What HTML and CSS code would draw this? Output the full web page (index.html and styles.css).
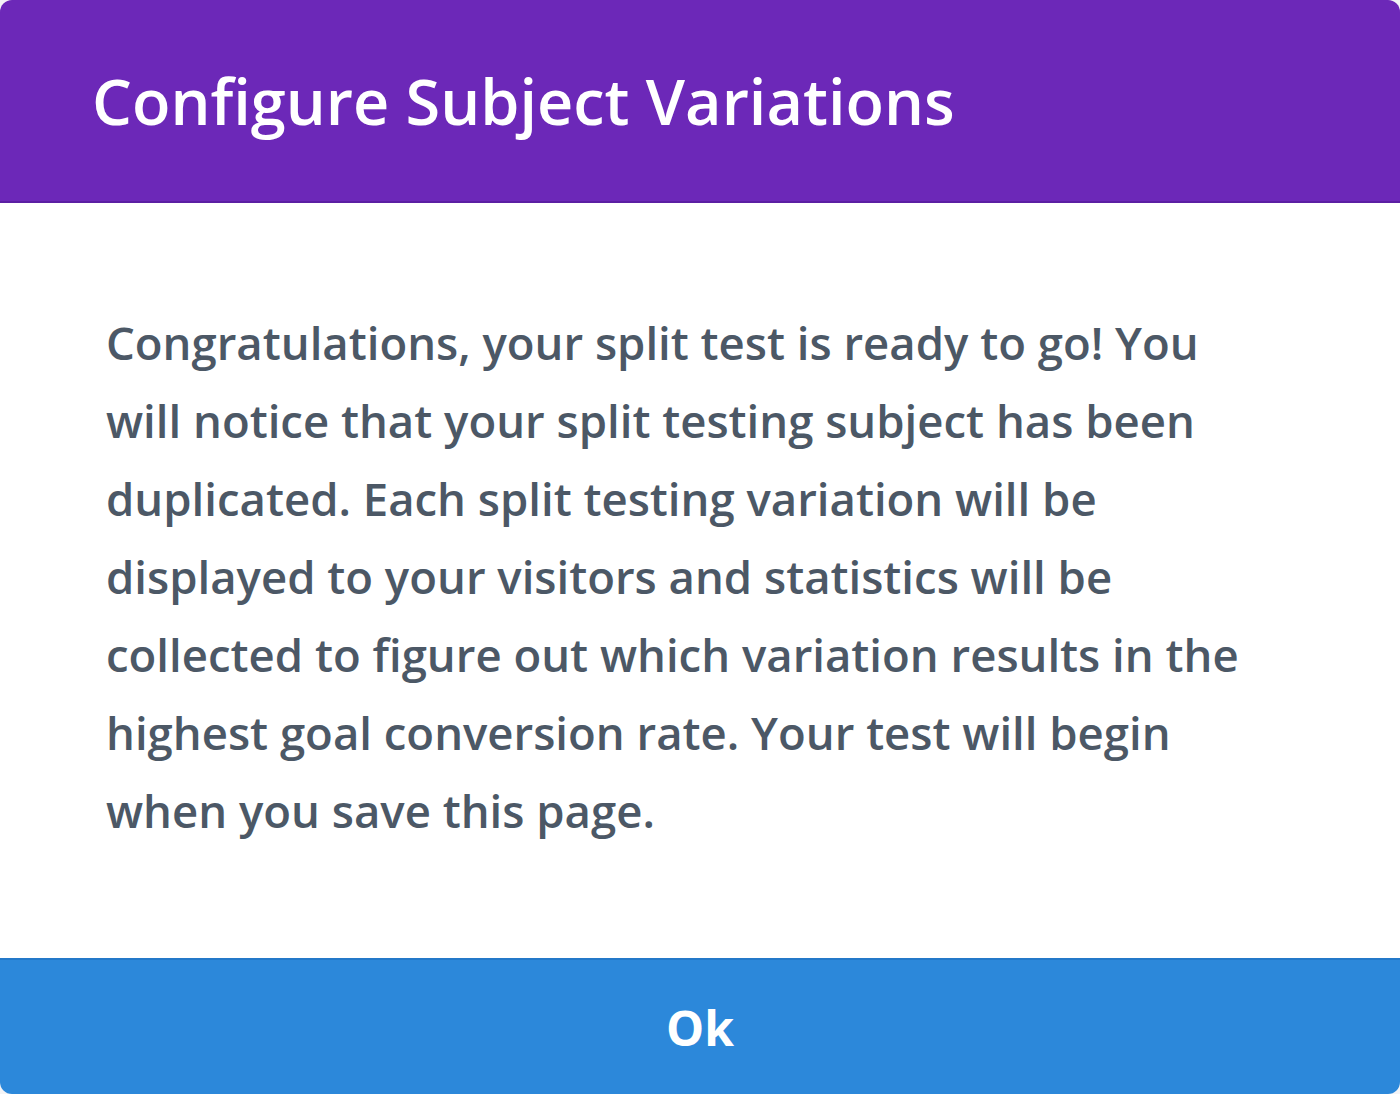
FILE: index.html
```html
<!DOCTYPE html>
<html>
<head>
<meta charset="utf-8">
<link rel="stylesheet" href="styles.css">
</head>
<body>
<div class="modal">
  <div class="modal-header">
    <h1 class="modal-title">Configure Subject Variations</h1>
  </div>
  <div class="modal-body">
    <p class="modal-text">Congratulations, your split test is ready to go! You will notice that your split testing subject has been duplicated. Each split testing variation will be displayed to your visitors and statistics will be collected to figure out which variation results in the highest goal conversion rate. Your test will begin when you save this page.</p>
  </div>
  <button class="modal-button">Ok</button>
</div>
</body>
</html>
```
FILE: styles.css
```css
html, body {
  margin: 0;
  padding: 0;
  height: 100%;
  background: #f4f4f6;
}
.modal {
  height: 1094px;
  display: flex;
  flex-direction: column;
  background: #fff;
  border-radius: 12px;
  overflow: hidden;
  font-family: "Open Sans", "Noto Sans", sans-serif;
}
.modal-header {
  height: 201px;
  flex: none;
  background: #6c28b8;
  border-bottom: 2px solid #5b1fa3;
  display: flex;
  align-items: center;
  padding-left: 92px;
  box-sizing: content-box;
}
.modal-title {
  margin: 0;
  color: #fff;
  font-size: 63px;
  font-weight: 600;
  letter-spacing: 0;
}
.modal-body {
  flex: 1 1 auto;
  min-height: 0;
  padding: 100px 133px 0 106px;
  box-sizing: border-box;
}
.modal-text {
  margin: 0;
  color: #4c5866;
  font-size: 45.5px;
  line-height: 78px;
  font-weight: 600;
}
.modal-button {
  flex: none;
  height: 136px;
  min-height: 136px;
  border: 0;
  border-top: 2px solid #2479c9;
  background: #2c88da;
  color: #fff;
  font-family: "Open Sans", "Noto Sans", sans-serif;
  font-size: 48px;
  font-weight: 700;
  padding: 0;
  width: 100%;
}
```
